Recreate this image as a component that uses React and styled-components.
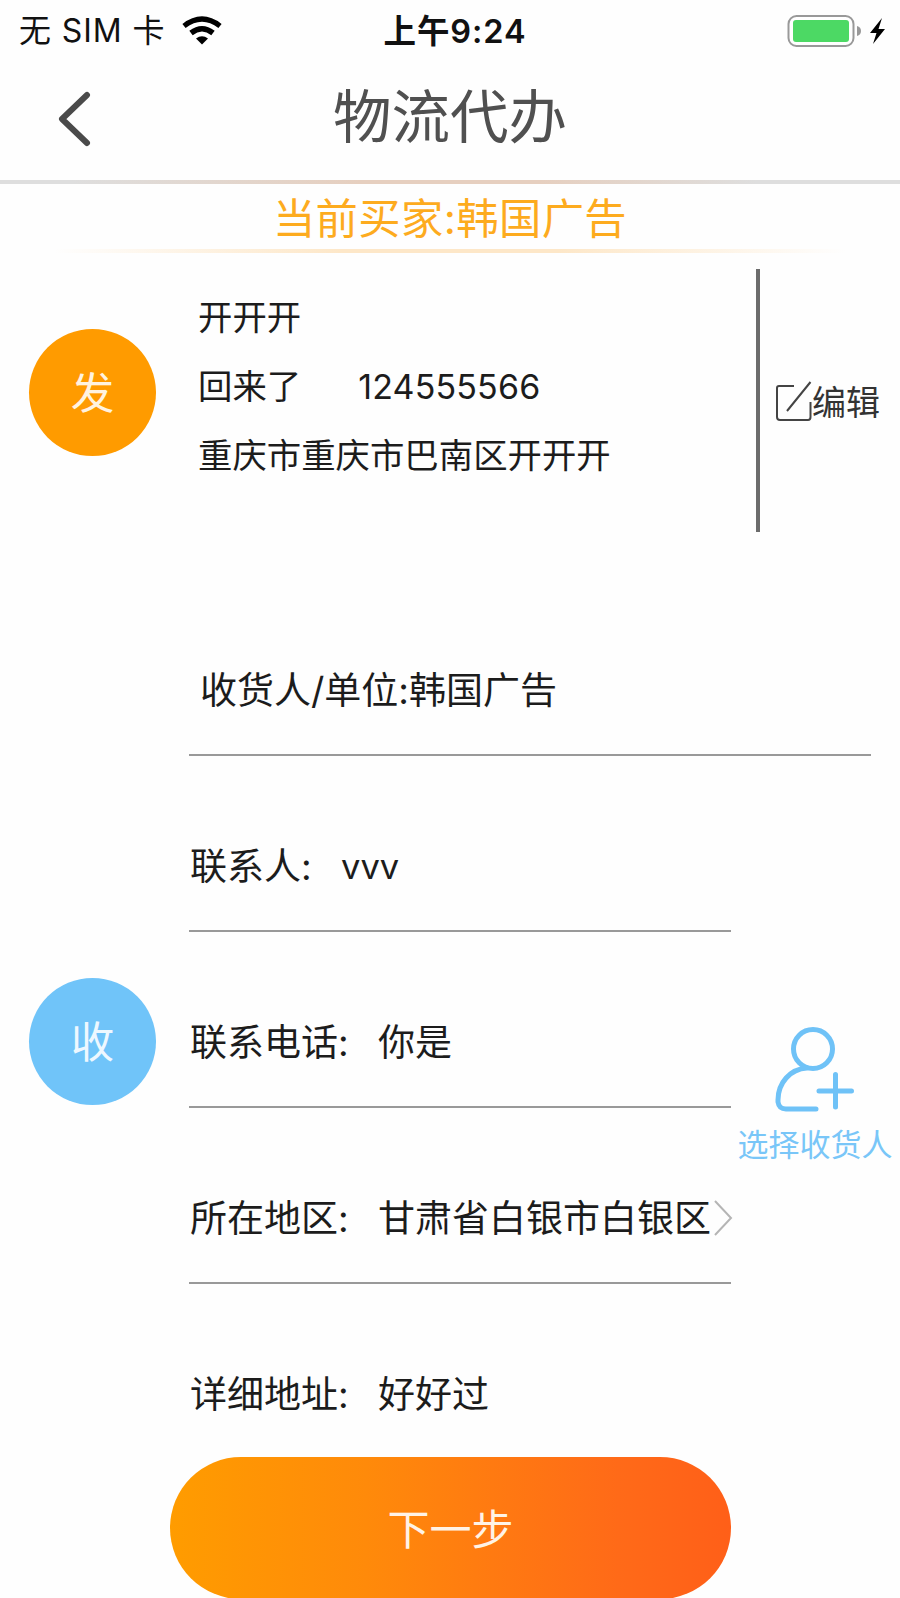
import React from "react";
import styled, { createGlobalStyle } from "styled-components";

const Global = createGlobalStyle`
  * { box-sizing: border-box; }
  html, body { margin: 0; padding: 0; background: #fefefe; overflow: hidden; }
  body { font-family: Inter, "Noto Sans CJK SC", sans-serif; color: #1c1c1c; }
`;

const Screen = styled.div`
  width: 900px;
  height: 1598px;
  overflow: hidden;
  display: flex;
  flex-direction: column;
  background: #fefefe;

  > * { flex-shrink: 0; }
`;

const StatusBar = styled.div`
  display: grid;
  grid-template-columns: 1fr auto 1fr;
  align-items: center;
  height: 60px;
  padding: 0 14px 0 19px;
  color: #111;
  line-height: 60px;
`;

const Carrier = styled.div`
  display: flex;
  align-items: center;
  gap: 17px;
  white-space: pre;
  font-size: 32px;
  letter-spacing: 0.9px;
`;

const Clock = styled.div`
  padding: 2px 0 0 5px;
  font-weight: 600;
  font-size: 32.5px;
  letter-spacing: 0.9px;
`;

const Power = styled.div`
  display: flex;
  align-items: center;
  justify-content: flex-end;
`;

const NavBar = styled.header`
  display: grid;
  grid-template-columns: 100px 1fr 100px;
  align-items: center;
  height: 120px;
  padding-bottom: 8px;
`;

const BackButton = styled.button`
  display: flex;
  justify-content: flex-end;
  border: 0;
  padding: 5px 8px 0 0;
  background: none;
`;

const Title = styled.h1`
  margin: 1px 0 0;
  text-align: center;
  font-size: 58.5px;
  font-weight: 400;
  line-height: 80px;
  color: #505050;
`;

const BuyerBanner = styled.div`
  height: 73px;
  border-top: 4px solid;
  border-image: linear-gradient(90deg, #dedede 8%, #e6cfbf 40%, #e6cfbf 60%, #dedede 84%) 1;
  background: linear-gradient(90deg, transparent 6%, #fde7c8 38%, #fde7c8 62%, transparent 94%) bottom / 100% 4px no-repeat;
  text-align: center;
  font-size: 42.3px;
  letter-spacing: 0.4px;
  line-height: 69px;
  color: #fdab1e;
`;

const Sender = styled.section`
  display: grid;
  grid-template-columns: 198px 558px 1fr;
  height: 263px;
  margin-top: 16px;
`;

const Badge = styled.div`
  display: flex;
  align-items: center;
  justify-content: center;
  width: 127px;
  height: 127px;
  margin: ${(p) => p.$top}px 0 0 29px;
  border-radius: 50%;
  background: ${(p) => p.$color};
  color: ${(p) => p.$ink};
  font-size: 43.5px;
  line-height: 60px;
`;

const SenderInfo = styled.div`
  padding-top: 14px;
  font-size: 34.4px;
  line-height: 69px;
`;

const InfoLine = styled.div`
  display: flex;
  gap: 57px;
  height: 69px;
`;

const Phone = styled.span`
  font-size: 34px;
  letter-spacing: 0.15px;
`;

const EditButton = styled.button`
  display: flex;
  align-items: center;
  border: 0;
  border-left: 4px solid #6c6c6c;
  padding: 0 0 0 15px;
  background: none;
  color: #333;
  font: inherit;
  font-size: 34px;
  white-space: nowrap;
`;

const Receiver = styled.section`
  display: grid;
  grid-template-columns: 189px 542px 1fr;
  height: 877px;
  margin-top: 48px;
`;

const Fields = styled.div`
  display: flex;
  flex-direction: column;
`;

const Field = styled.div`
  display: flex;
  align-items: flex-end;
  flex-shrink: 0;
  width: ${(p) => p.$width || 542}px;
  height: 176px;
  padding: 0 0 35px ${(p) => p.$indent || 1}px;
  border-bottom: ${(p) => (p.$last ? "2px solid transparent" : "2px solid #999")};
  font-size: 37px;
  line-height: 56px;
  white-space: nowrap;
`;

const FieldValue = styled.span`
  flex: 0 0 auto;
  margin-left: auto;
  width: 353px;
  font-size: ${(p) => p.$size || 37}px;
`;

const ContactValue = styled(FieldValue)`
  width: 390px;
`;

const RegionValue = styled(FieldValue)`
  display: flex;
  align-items: center;
  justify-content: space-between;
`;

const FieldArrow = styled.svg`
  flex-shrink: 0;
  margin: 0 -2px 3px 0;
`;

const PickReceiver = styled.button`
  display: flex;
  flex-direction: column;
  align-items: center;
  align-self: start;
  gap: 11px;
  width: 168px;
  margin-top: 444px;
  border: 0;
  padding: 0;
  background: none;
  color: #79c6f8;
  font: inherit;
  font-size: 31px;
  line-height: 44px;
  white-space: nowrap;
`;

const NextButton = styled.button`
  width: 561px;
  height: 142px;
  margin: 0 0 0 170px;
  border: 0;
  border-radius: 71px;
  padding: 0 0 4px;
  background: linear-gradient(90deg, #ff9c00, #ff8a0a 35%, #ff6a18 80%, #ff5f18);
  color: #fff3e6;
  font: inherit;
  font-size: 42px;
`;

export default function App() {
  return (
    <Screen>
      <Global />
      <StatusBar>
        <Carrier>
          <span>无 SIM 卡</span>
          <svg width="40" height="30" viewBox="0 0 40 30" fill="none" stroke="#000">
            <path d="M2 10Q20 -4 38 10" strokeWidth="5.200" />
            <path d="M9 17Q20 8.500 31 17" strokeWidth="5.500" />
            <path d="M20 28.500L14 22.500Q20 18 26 22.500Z" fill="#000" stroke="none" />
          </svg>
        </Carrier>
        <Clock>上午9:24</Clock>
        <Power>
          <svg width="100" height="34" viewBox="0 0 100 34">
            <rect x="2.500" y="2" width="65" height="30" rx="8" fill="#fff" stroke="#999" strokeWidth="2" />
            <rect x="7" y="6" width="56" height="22" rx="3" fill="#4cd964" />
            <path d="M71 12Q75 13 75 17T71 22Z" fill="#999" />
            <path d="M96 4L84 19H90.500L87 30L99 15H92.500Z" fill="#000" />
          </svg>
        </Power>
      </StatusBar>

      <NavBar>
        <BackButton aria-label="返回">
          <svg width="34" height="56" viewBox="0 0 34 56" fill="none" stroke="#4a4a4a" strokeWidth="6" strokeLinecap="round" strokeLinejoin="round">
            <path d="M29 4L4 28L29 52" />
          </svg>
        </BackButton>
        <Title>物流代办</Title>
      </NavBar>

      <BuyerBanner>当前买家:韩国广告</BuyerBanner>

      <Sender>
        <Badge $color="#ff9b00" $ink="#fff3e0" $top={60}>发</Badge>
        <SenderInfo>
          <InfoLine>开开开</InfoLine>
          <InfoLine>
            <span>回来了</span>
            <Phone>124555566</Phone>
          </InfoLine>
          <InfoLine>重庆市重庆市巴南区开开开</InfoLine>
        </SenderInfo>
        <EditButton>
          <svg width="37" height="42" viewBox="0 0 37 42" fill="none" stroke="#444" strokeWidth="2">
            <path d="M19 6H4Q2 6 2 8V37Q2 40 5 40H33Q35.500 40 35.500 37V22M35.500 2L12 31" />
          </svg>
          编辑
        </EditButton>
      </Sender>

      <Receiver>
        <Badge $color="#70c4f9" $ink="#eef8ff" $top={398}>收</Badge>
        <Fields>
          <Field $width={682} $indent={11}>收货人/单位:韩国广告</Field>
          <Field>联系人:<ContactValue $size={34.5}>vvv</ContactValue></Field>
          <Field>联系电话:<FieldValue>你是</FieldValue></Field>
          <Field>
            所在地区:
            <RegionValue>
              甘肃省白银市白银区
              <FieldArrow width="20" height="38" viewBox="0 0 20 38" fill="none" stroke="#b5b5b5" strokeWidth="2">
                <path d="M2 2L18 19L2 36" />
              </FieldArrow>
            </RegionValue>
          </Field>
          <Field $last>详细地址:<FieldValue>好好过</FieldValue></Field>
        </Fields>
        <PickReceiver>
          <svg width="82" height="88" viewBox="0 0 82 88" fill="none" stroke="#6fc2f7" strokeWidth="5" strokeLinecap="round">
            <circle cx="39" cy="25" r="19.500" />
            <path d="M33 44C16 45 4 59 4 76V78Q5 85 12 85H42" />
            <path d="M45 67H77.500M61.500 50.500V83" />
          </svg>
          选择收货人
        </PickReceiver>
      </Receiver>

      <NextButton>下一步</NextButton>
    </Screen>
  );
}
